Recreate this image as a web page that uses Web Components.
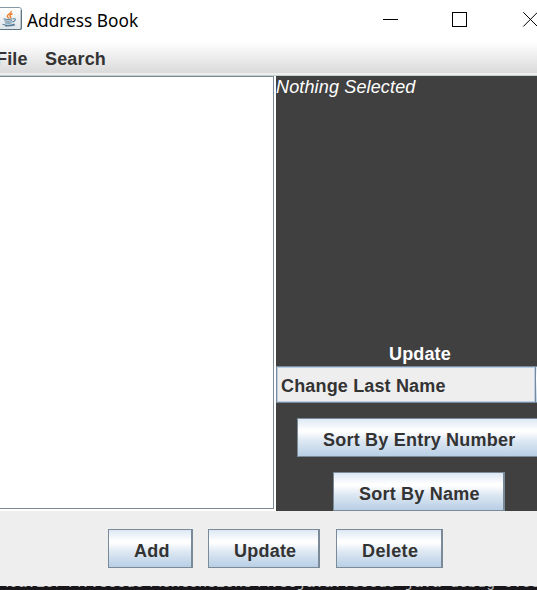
<!DOCTYPE html>
<html lang="en"><head><meta charset="utf-8"><title>Address Book</title>
<style>html,body{margin:0;width:537px;height:590px;overflow:hidden;background:#fff}</style></head><body>
<address-book></address-book>
<script>
const define=(name,html)=>{
  const t=document.createElement('template');t.innerHTML=html;
  customElements.define(name,class extends HTMLElement{
    constructor(){super();this.attachShadow({mode:'open'}).append(t.content.cloneNode(true));}
  });
};
define('title-bar',`<style>
:host{display:flex;height:40px;background:#fff;color:#000;font:18.5px/40px "Noto Sans",sans-serif;overflow:hidden}
.logo{width:27px;flex:none}.name{width:356px;flex:none;white-space:nowrap}.name span{display:inline-block;transform:scaleX(.933);transform-origin:0 50%}
svg{display:block;flex:none}
</style>
<svg class="logo" width="27" height="40" viewBox="0 0 27 40">
<defs><linearGradient id="g" x2="0" y2="1"><stop stop-color="#fff"/><stop offset="1" stop-color="#dfe5e9"/></linearGradient></defs>
<rect x="-3" y="7.5" width="24.3" height="22" rx="2" fill="url(#g)" stroke="#8598a5"/>
<path d="M-1 29.5H20Q21.4 29.5 21.4 28V10" fill="none" stroke="#5f7482" stroke-width="1.2"/>
<path d="M11.300 11C12 13.500 7 14.300 7.300 16.200C7.500 17.300 8.600 17.600 8.800 18.500M12.500 13.700C10.200 14.300 9.400 15.300 10.300 16.200C11 17 10.700 17.700 10 18.300" fill="none" stroke="#ed7d2b" stroke-width="1.400"/>
<path d="M3.600 18.800Q8 20.200 12.500 18.800M4.300 20.800Q8 21.600 12.300 20.800M5 22.700Q8 23.600 11.800 22.700M13 18.800Q16.300 18.200 15 20.400Q14 21.800 12.300 22M2.500 24.200Q8 26.300 14.500 24M5 25.900Q10 26.500 15 25" fill="none" stroke="#59809c" stroke-width="1.100"/>
</svg>
<div class="name"><span>Address Book</span></div>
<svg width="154" height="40" viewBox="383 0 154 40" fill="none" stroke="#000"><path d="M383 19.500H398M452.500 12.500H466.500V26.500H452.500Z" shape-rendering="crispEdges"/><path d="M523.300 12.300L537.500 26.500M523.300 26.500L537.500 12.300"/></svg>`);
define('menu-bar',`<style>
:host{display:flex;box-sizing:border-box;height:36px;background:linear-gradient(#fff 0,#fff 2px,#dadada 33px,#eee 33px,#eee 35px,#c4cfcb 35px);font:bold 18px/39px "Liberation Sans",Arial,sans-serif;letter-spacing:.15px;color:#333;white-space:nowrap}
.a{width:49px;margin-left:-4px;flex:none}
</style><div class="a">File</div><div>Search</div>`);
define('metal-button',`<style>
:host{display:block;box-sizing:border-box;flex:none;height:39px;border:1px solid #7a8a99;border-right-width:2px;background:linear-gradient(#dde8f3 0,#fff 30%,#fff 34%,#dce7f2 60%,#b8cfe5 100%);font:bold 18px/43px "Liberation Sans",Arial,sans-serif;letter-spacing:.22px;color:#333;padding-left:25px;white-space:nowrap}
</style><slot></slot>`);
define('entry-list',`<style>
:host{display:block;box-sizing:border-box;width:276px;height:435px;padding:0 2px 2px 0;background:#fff}
div{box-sizing:border-box;height:433px;border:1px solid #7a8a99;border-left:0;background:#fff}
</style><div></div>`);
define('combo-box',`<style>
:host{display:flex;box-sizing:border-box;width:290px;height:37px;border:1px solid #7a8a99;background:#eee;font:bold 18px/35px "Liberation Sans",Arial,sans-serif;letter-spacing:.16px;color:#333}
.v{box-sizing:border-box;width:258px;height:35px;border:1px solid #b8cfe5;padding-left:3px;line-height:36px;flex:none}
.b{width:31px;border-left:1px solid #7a8a99;background:linear-gradient(#dde8f3,#fff 32%,#b8cfe5)}
</style><div class="v"><slot></slot></div><div class="b"></div>`);
define('detail-pane',`<style>
:host{display:flex;flex-direction:column;width:261px;height:435px;overflow:hidden;background:#404040;color:#fff;font:18px/21px "Liberation Sans",Arial,sans-serif;letter-spacing:.15px}
.n{height:267px;font-style:italic;flex:none;padding-top:1px;box-sizing:border-box}
.u{height:23px;line-height:22px;font-weight:bold;padding-left:113px;flex:none}
combo-box{flex:none}
.one{width:246px;margin:15px 0 0 21px}.two{width:172px;margin:15px 0 0 57px}
</style><div class="n">Nothing Selected</div><div class="u">Update</div><combo-box>Change Last Name</combo-box>
<metal-button class="one">Sort By Entry Number</metal-button><metal-button class="two">Sort By Name</metal-button>`);
define('action-bar',`<style>
:host{display:flex;box-sizing:border-box;height:75px;padding:18px 0 0 108px;background:#eee}
</style><metal-button style="width:85px;margin-right:15px">Add</metal-button><metal-button style="width:112px;margin-right:16px">Update</metal-button><metal-button style="width:107px;letter-spacing:.4px">Delete</metal-button>`);
define('terminal-strip',`<style>
:host{display:flex;align-items:flex-end;height:4px;overflow:hidden;background:#18161b;color:#bbb;font:15px/17px "Liberation Mono",monospace;white-space:pre}
span{display:block;margin:0 0 -2px -9px}
</style><span>\\\\Javier\\\\.vscode\\\\extensions\\\\vscjava.vscode-java-debug-0.58.</span>`);
define('address-book',`<style>:host{display:block;width:537px;height:590px;overflow:hidden}.m{display:flex;height:435px}</style>
<title-bar></title-bar><menu-bar></menu-bar><div class="m"><entry-list></entry-list><detail-pane></detail-pane></div><action-bar></action-bar><terminal-strip></terminal-strip>`);
</script></body></html>
